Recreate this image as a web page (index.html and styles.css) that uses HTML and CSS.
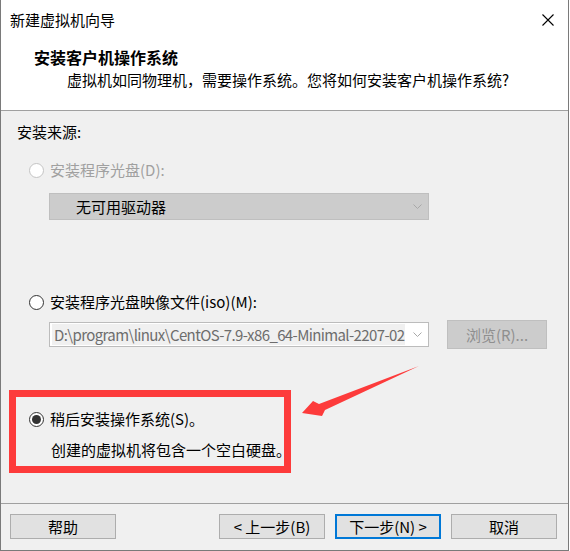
FILE: index.html
```html
<!DOCTYPE html>
<html lang="zh-CN">
<head>
<meta charset="utf-8">
<title>新建虚拟机向导</title>
<link rel="stylesheet" href="styles.css">
</head>
<body>
<div class="window">
  <div class="titlebar">
    <span class="title">新建虚拟机向导</span>
    <span class="close">
      <svg width="12" height="12" viewBox="0 0 12 12"><path d="M0.5 0.5 L11.5 11.5 M11.5 0.5 L0.5 11.5" stroke="#000" stroke-width="1.1" fill="none"/></svg>
    </span>
  </div>
  <div class="header">
    <div class="h-title">安装客户机操作系统</div>
    <div class="h-sub">虚拟机如同物理机，需要操作系统。您将如何安装客户机操作系统?</div>
  </div>
  <div class="content">
    <div class="group-label">安装来源:</div>
    <div class="radio-row disabled r1"><span class="radio"></span><span>安装程序光盘(D):</span></div>
    <div class="select select-disabled s1">
      <span class="sel-text">无可用驱动器</span>
      <svg class="chev" width="9" height="5" viewBox="0 0 9 5"><path d="M0.5 0.5 L4.5 4.5 L8.5 0.5" stroke="#a8a8a8" fill="none"/></svg>
    </div>
    <div class="radio-row r2"><span class="radio"></span><span>安装程序光盘映像文件(iso)(M):</span></div>
    <div class="iso-row">
      <div class="select s2">
        <span class="iso-text">D:\program\linux\CentOS-7.9-x86_64-Minimal-2207-02</span>
        <svg class="chev" width="9" height="5" viewBox="0 0 9 5"><path d="M0.5 0.5 L4.5 4.5 L8.5 0.5" stroke="#a8a8a8" fill="none"/></svg>
      </div>
      <button class="btn btn-disabled browse">浏览(R)...</button>
    </div>
    <div class="radio-row r3"><span class="radio checked"></span><span>稍后安装操作系统(S)。</span></div>
    <div class="note">创建的虚拟机将包含一个空白硬盘。</div>
  </div>
  <div class="footer">
    <button class="btn">帮助</button>
    <div class="footer-right">
      <button class="btn">&lt; 上一步(B)</button>
      <button class="btn btn-primary">下一步(N) &gt;</button>
      <button class="btn">取消</button>
    </div>
  </div>
  <div class="annot-box"></div>
  <svg class="annot-arrow" width="124" height="55" viewBox="299 364 124 55">
    <polygon points="302,413 313,401 319,404 419,366 325,410 322,416" fill="#fd3b3b"/>
  </svg>
</div>
</body>
</html>
```

FILE: styles.css
```css
* { box-sizing: border-box; }
html, body { margin: 0; padding: 0; }
body {
  width: 570px;
  height: 551px;
  overflow: hidden;
  background: #ffffff;
  font-family: "Noto Sans CJK SC", "Microsoft YaHei", sans-serif;
  font-size: 15px;
  color: #000;
}
.window {
  position: relative;
  width: 569px;
  height: 551px;
  border: 1px solid #7a7a7a;
  border-top: none;
  background: #fff;
  display: flex;
  flex-direction: column;
}
.titlebar {
  height: 40px;
  flex: none;
  display: flex;
  align-items: center;
  justify-content: space-between;
  padding-left: 9px;
}
.title { line-height: 40px; }
.close {
  width: 40px;
  height: 40px;
  display: flex;
  align-items: center;
  justify-content: center;
}
.header {
  height: 71px;
  flex: none;
  padding: 7px 0 0 33px;
  border-bottom: 1px solid #a0a0a0;
}
.h-title {
  font-weight: bold;
  font-size: 16px;
  line-height: 20px;
}
.h-sub {
  margin-top: 3px;
  padding-left: 33px;
  line-height: 20px;
}
.content {
  height: 392px;
  flex: none;
  background: #f0f0f0;
  padding: 11px 0 0 16px;
}
.group-label { line-height: 20px; }
.radio-row {
  display: flex;
  align-items: center;
  gap: 6px;
  line-height: 20px;
  margin-left: 12px;
}
.radio {
  width: 15px;
  height: 15px;
  border-radius: 50%;
  border: 1px solid #333;
  background: #fff;
  display: flex;
  align-items: center;
  justify-content: center;
}
.radio.checked::after {
  content: "";
  width: 9px;
  height: 9px;
  border-radius: 50%;
  background: #333;
}
.disabled { color: #a0a0a0; }
.disabled .radio { border-color: #c4c4c4; }
.r1 { margin-top: 18px; }
.select {
  width: 380px;
  display: flex;
  align-items: center;
  justify-content: space-between;
  padding-right: 6px;
  border: 1px solid #bcbcbc;
}
.s1 {
  height: 27px;
  margin: 13px 0 0 32px;
  padding-left: 26px;
  background: #cccccc;
  border-color: #bfbfbf;
}
.sel-text { line-height: 20px; color: #000; }
.r2 { margin-top: 72px; }
.iso-row {
  display: flex;
  align-items: center;
  gap: 18px;
  height: 29px;
  margin: 8px 0 0 32px;
}
.s2 {
  height: 25px;
  background: #fff;
  padding-left: 2px;
}
.iso-text {
  width: 353px;
  height: 21px;
  line-height: 21px;
  background: #f0f0f0;
  color: #6d6d6d;
  padding-left: 2px;
  letter-spacing: -0.62px;
  white-space: nowrap;
}
.r3 { margin-top: 60px; }
.note {
  margin-top: 11px;
  padding-left: 34px;
  line-height: 20px;
}
.footer {
  height: 47px;
  flex: none;
  background: #f0f0f0;
  border-top: 1px solid #a0a0a0;
  display: flex;
  justify-content: space-between;
  align-items: flex-start;
  padding: 10px 11px 0 9px;
}
.footer-right { display: flex; gap: 10px; }
.btn {
  width: 106px;
  height: 25px;
  padding: 0;
  margin: 0;
  font-family: inherit;
  font-size: 15px;
  line-height: 20px;
  color: #000;
  background: #e1e1e1;
  border: 1px solid #adadad;
}
.btn-primary { border: 2px solid #0078d7; }
.btn-disabled {
  background: #cccccc;
  border-color: #bfbfbf;
  color: #8f8f8f;
}
.browse { width: 100px; height: 29px; }
.annot-box {
  position: absolute;
  left: 8px;
  top: 390px;
  width: 282px;
  height: 83px;
  border: 7px solid #fd3b3b;
}
.annot-arrow {
  position: absolute;
  left: 298px;
  top: 364px;
}
```
